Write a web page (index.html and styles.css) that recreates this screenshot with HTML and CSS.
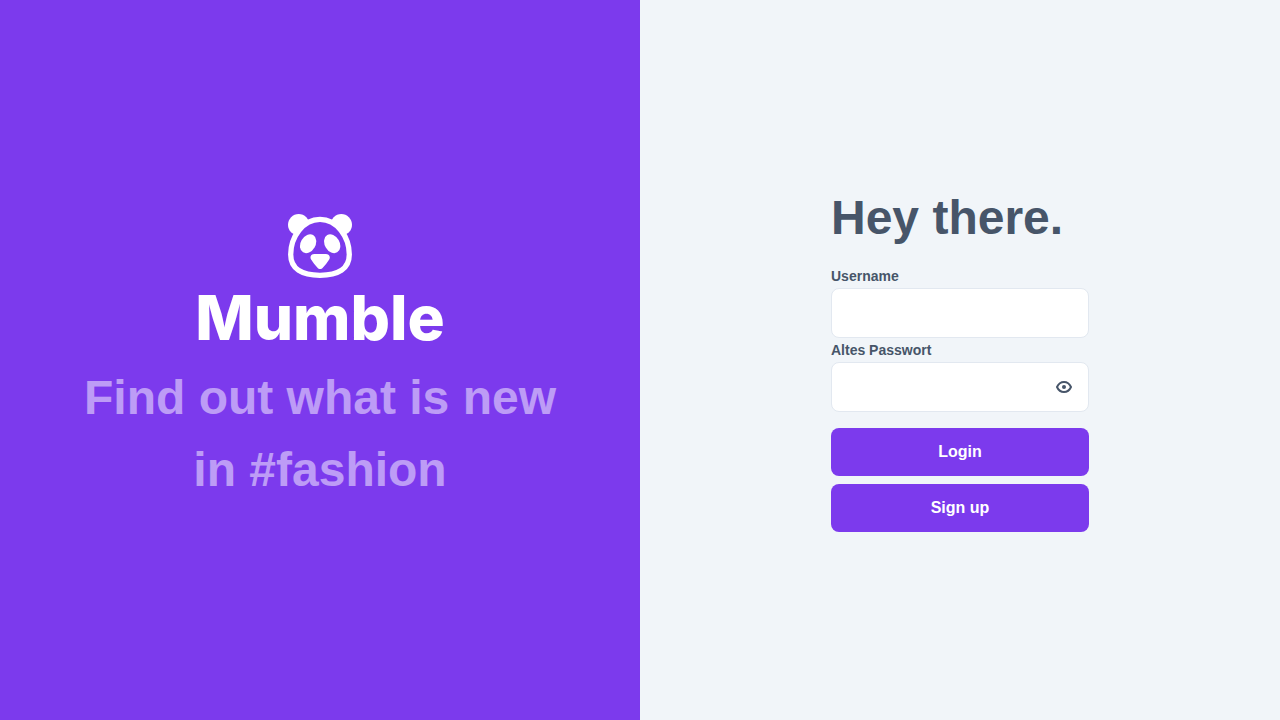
FILE: index.html
```html
<!DOCTYPE html>
<html lang="en">
<head>
  <meta charset="utf-8">
  <meta name="viewport" content="width=device-width, initial-scale=1">
  <title>Mumble – Login</title>
  <link rel="stylesheet" href="styles.css">
</head>
<body>
  <div class="layout">
    <section class="brand">
      <svg class="brand-icon" viewBox="0 0 64 64" aria-hidden="true">
        <circle cx="10.7" cy="10.7" r="10.7" fill="#fff"/>
        <circle cx="53.3" cy="10.7" r="10.7" fill="#fff"/>
        <path d="M32 5.3C15 5.3 2.7 23 2.7 40.5C2.7 55 14 61.3 32 61.3S61.3 55 61.3 40.5C61.3 23 49 5.3 32 5.3Z" fill="#7c3aed" stroke="#fff" stroke-width="5.3"/>
        <ellipse cx="20.1" cy="29.7" rx="7.4" ry="10" transform="rotate(30 20.1 29.7)" fill="#fff"/>
        <ellipse cx="44.2" cy="29.7" rx="7.4" ry="10" transform="rotate(-30 44.2 29.7)" fill="#fff"/>
        <path d="M26.2 39.9H38C41 39.9 42.8 43 41.2 45.5C39.4 48.4 37.2 51 35 53.5C33.3 55.5 31 55.5 29.3 53.5C27.1 51 24.9 48.4 23.1 45.5C21.5 43 23.2 39.9 26.2 39.9Z" fill="#fff"/>
      </svg>
      <div class="wordmark">Mumble</div>
      <p class="tagline">Find out what is new in #fashion</p>
    </section>
    <main class="panel">
      <form class="login">
        <h1 class="title">Hey there.</h1>
        <label class="label" for="username">Username</label>
        <input class="input" id="username" type="text">
        <label class="label" for="password">Altes Passwort</label>
        <div class="field">
          <input class="input input-icon" id="password" type="password">
          <button class="reveal" type="button" aria-label="Show password">
            <svg class="eye" viewBox="0 0 16 16" aria-hidden="true">
              <path d="M1 8C2.5 4.7 5 3 8 3S13.5 4.7 15 8C13.5 11.3 11 13 8 13S2.5 11.3 1 8Z" fill="none" stroke="currentColor" stroke-width="2" stroke-linejoin="round"/>
              <circle cx="8" cy="8" r="2" fill="currentColor"/>
            </svg>
          </button>
        </div>
        <div class="actions">
          <button class="button" type="submit">Login</button>
          <button class="button" type="button">Sign up</button>
        </div>
      </form>
    </main>
  </div>
</body>
</html>
```
FILE: styles.css
```css
* {
  box-sizing: border-box;
}

body {
  margin: 0;
  font-family: "Liberation Sans", Arial, sans-serif;
  color: #475569;
  background: #f1f5f9;
}

.layout {
  display: grid;
  grid-template-columns: 1fr 1fr;
  min-height: 100vh;
}

.brand {
  display: flex;
  flex-direction: column;
  align-items: center;
  justify-content: center;
  padding: 0 64px;
  background: #7c3aed;
  color: #fff;
}

.brand-icon {
  width: 64px;
  height: 64px;
}

.wordmark {
  margin: 16px 0 20px;
  font-family: Inter, "Liberation Sans", sans-serif;
  font-size: 62px;
  font-weight: 800;
  line-height: 48px;
}

.tagline {
  margin: 0;
  font-size: 48px;
  font-weight: 700;
  line-height: 72px;
  text-align: center;
  color: rgb(255 255 255 / 50%);
}

.panel {
  display: flex;
  align-items: center;
  justify-content: center;
}

.login {
  display: flex;
  flex-direction: column;
  width: 100%;
  max-width: 258px;
}

.title {
  margin: 0 0 16px;
  font-size: 48px;
  font-weight: 700;
  line-height: 60px;
}

.label {
  font-size: 14px;
  font-weight: 700;
  line-height: 24px;
}

.input {
  width: 100%;
  height: 50px;
  padding: 0 16px;
  border: 1px solid #e2e8f0;
  border-radius: 8px;
  background: #fff;
  color: inherit;
  font: inherit;
}

.field {
  position: relative;
}

.input-icon {
  display: block;
  padding-right: 48px;
}

.reveal {
  position: absolute;
  inset: 0 17px 0 auto;
  display: flex;
  align-items: center;
  padding: 0;
  border: 0;
  background: none;
  color: inherit;
  cursor: pointer;
}

.eye {
  width: 16px;
  height: 16px;
}

.actions {
  display: flex;
  flex-direction: column;
  gap: 8px;
  margin-top: 16px;
}

.button {
  height: 48px;
  border: 0;
  border-radius: 8px;
  background: #7c3aed;
  color: #fff;
  font: inherit;
  font-weight: 700;
  cursor: pointer;
}
```
